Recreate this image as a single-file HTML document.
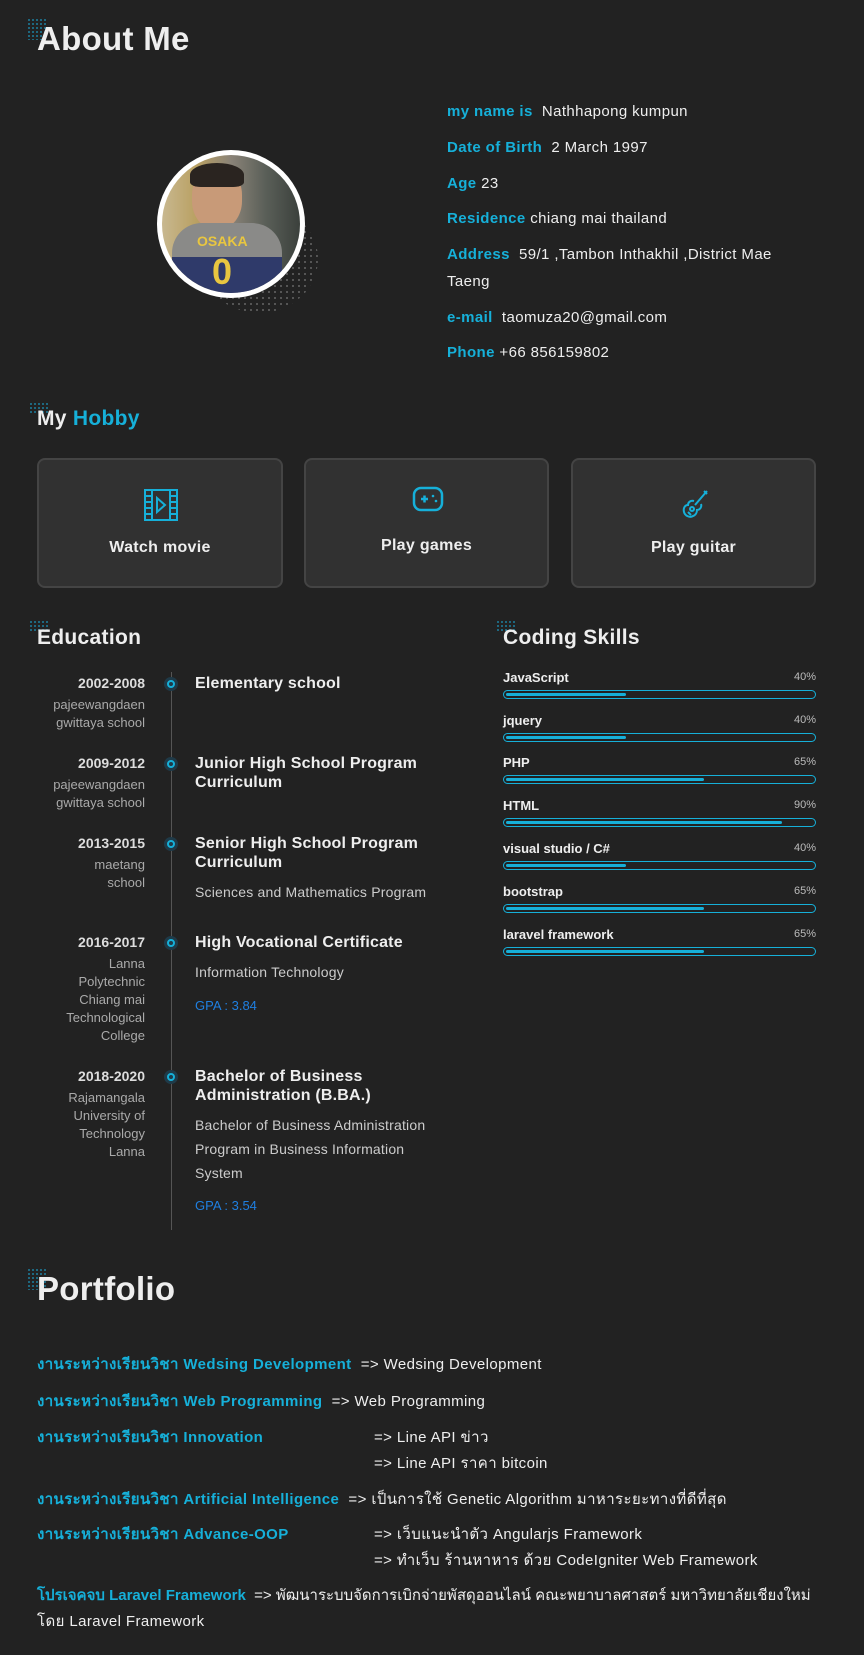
<!DOCTYPE html>
<html><head><meta charset="utf-8"><style>
*{margin:0;padding:0;box-sizing:border-box}
body{width:864px;height:1655px;background:#222222;color:#eee;font-family:"Liberation Sans","Noto Sans CJK SC",sans-serif;position:relative;overflow:hidden}
.a{position:absolute;white-space:nowrap}
.c{color:#16b0d9}
.h1{font-size:33px;font-weight:bold;color:#eee;letter-spacing:0.3px}
.h2{font-size:21px;font-weight:bold;color:#eee;letter-spacing:0.3px}
.dots{position:absolute;width:20px;height:18px;background-image:radial-gradient(#1d7fa0 0.8px,transparent 1px);background-size:4px 4px}
.info{font-size:15px;color:#eee;letter-spacing:0.4px}
.info b{color:#16b0d9;font-weight:bold}
.card{position:absolute;top:458px;height:130px;background:#313131;border:2px solid #444;border-radius:8px}
.card span{position:absolute;left:0;right:0;text-align:center;font-size:16px;font-weight:bold;color:#eee;letter-spacing:0.3px}
.yr{position:absolute;right:719px;font-size:14px;font-weight:bold;color:#ddd;text-align:right}
.sch{position:absolute;right:719px;font-size:13px;color:#aaa;text-align:right;line-height:18px;white-space:normal;width:120px}
.dot{position:absolute;left:164px;width:14px;height:14px;border-radius:50%;background:#1f3a48}
.dot:after{content:"";position:absolute;left:3px;top:3px;width:8px;height:8px;border-radius:50%;border:2px solid #16b0d9;box-sizing:border-box}
.tt{position:absolute;left:195px;font-size:16px;font-weight:bold;color:#eee;line-height:19px;letter-spacing:0.2px}
.td{position:absolute;left:195px;font-size:14px;color:#ccc;line-height:24px;letter-spacing:0.2px}
.gpa{position:absolute;left:195px;font-size:13px;color:#1f7fe0}
.sk{position:absolute;left:503px;width:313px;font-size:13px;font-weight:bold;color:#eee}
.sk i{position:absolute;right:0;top:1px;font-style:normal;font-weight:normal;font-size:11px;color:#bbb}
.bar{position:absolute;left:503px;width:313px;height:9px;border:1.5px solid #16b0d9;border-radius:5px}
.bar div{position:absolute;left:2px;top:1.5px;height:3.5px;background:#16b0d9;border-radius:2px}
.pf{position:absolute;font-size:15px;color:#eee;white-space:nowrap;letter-spacing:0.4px}
.pf b{color:#16b0d9}
</style></head><body>

<div class="dots" style="left:27px;top:18px;height:22px"></div>
<div class="a h1" style="left:37px;top:20px">About Me</div>

<div class="a" style="left:200px;top:205px;width:118px;height:108px;background-image:radial-gradient(#777 0.7px,transparent 1px);background-size:6px 6px;border-radius:50%"></div>
<div class="a" style="left:157px;top:150px;width:148px;height:148px;border-radius:50%;background:#fff"></div>
<div class="a" style="left:162px;top:155px;width:138px;height:138px;border-radius:50%;overflow:hidden;background:linear-gradient(90deg,#c8b890 0%,#b9a062 25%,#8a8378 50%,#5a5f58 75%,#3b403c 100%)">
 <div class="a" style="left:30px;top:12px;width:50px;height:62px;border-radius:45%;background:#c89a78"></div>
 <div class="a" style="left:28px;top:8px;width:54px;height:24px;border-radius:50% 50% 20% 20%;background:#2a2420"></div>
 <div class="a" style="left:10px;top:68px;width:110px;height:40px;border-radius:30px 30px 0 0;background:#8a8a88"></div>
 <div class="a" style="left:10px;top:102px;width:110px;height:40px;background:#2f3a6a"></div>
 <div class="a" style="left:35px;top:78px;font-size:14px;font-weight:bold;color:#e8c640">OSAKA</div>
 <div class="a" style="left:50px;top:96px;font-size:36px;font-weight:bold;color:#e8c640">0</div>
</div>

<div class="a info" style="left:447px;top:103px"><b>my name is</b>&nbsp; Nathhapong kumpun</div>
<div class="a info" style="left:447px;top:139px"><b>Date of Birth</b>&nbsp; 2 March 1997</div>
<div class="a info" style="left:447px;top:175px"><b>Age</b> 23</div>
<div class="a info" style="left:447px;top:210px"><b>Residence</b> chiang mai thailand</div>
<div class="a info" style="left:447px;top:246px"><b>Address</b>&nbsp; 59/1 ,Tambon Inthakhil ,District Mae</div>
<div class="a info" style="left:447px;top:273px">Taeng</div>
<div class="a info" style="left:447px;top:309px"><b>e-mail</b>&nbsp; taomuza20@gmail.com</div>
<div class="a info" style="left:447px;top:344px"><b>Phone</b> +66 856159802</div>

<div class="dots" style="left:29px;top:402px;height:12px"></div>
<div class="a h2" style="left:37px;top:407px">My <span class="c">Hobby</span></div>

<div class="card" style="left:37px;width:246px">
 <svg class="a" style="left:105px;top:29px" width="34" height="32" viewBox="0 0 34 32" fill="none" stroke="#16b0d9" stroke-width="2"><rect x="1" y="1" width="32" height="30"/><line x1="8" y1="1" x2="8" y2="31"/><line x1="26" y1="1" x2="26" y2="31"/><path d="M1 7h7M1 13h7M1 19h7M1 25h7M26 7h7M26 13h7M26 19h7M26 25h7"/><path d="M13 9l8 7-8 7z"/></svg>
 <span style="top:79px">Watch movie</span></div>
<div class="card" style="left:304px;width:245px">
 <svg class="a" style="left:106px;top:26px" width="32" height="26" viewBox="0 0 32 26" fill="none" stroke="#16b0d9" stroke-width="2.5"><rect x="2" y="2" width="28" height="22" rx="7"/><path d="M9 13h7M12.5 9.5v7" stroke-width="2.5"/><circle cx="21" cy="10" r="1.3" fill="#16b0d9" stroke="none"/><circle cx="24" cy="15" r="1.3" fill="#16b0d9" stroke="none"/></svg>
 <span style="top:77px">Play games</span></div>
<div class="card" style="left:571px;width:245px">
 <svg class="a" style="left:108px;top:29px" width="28" height="32" viewBox="0 0 28 32" fill="none" stroke="#16b0d9" stroke-width="2"><path d="M26 2l-12 14"/><path d="M23 2l3 3"/><path d="M13 12c-3-1-6 1-6 4-3 0-5 3-4 7 1 4 6 6 9 4 3-1 4-4 4-6 3 0 5-3 4-6"/><circle cx="11" cy="20" r="2"/><path d="M7 23l3 3"/></svg>
 <span style="top:79px">Play guitar</span></div>

<div class="dots" style="left:29px;top:620px;height:12px"></div>
<div class="a h2" style="left:37px;top:626px">Education</div>
<div class="dots" style="left:496px;top:620px;height:12px"></div>
<div class="a h2" style="left:503px;top:626px">Coding Skills</div>

<div class="a" style="left:171px;top:672px;width:1px;height:558px;background:#555"></div>

<div class="yr" style="top:675px">2002-2008</div>
<div class="sch" style="top:696px">pajeewangdaen gwittaya school</div>
<div class="dot" style="top:677px"></div>
<div class="tt" style="top:674px">Elementary school</div>

<div class="yr" style="top:755px">2009-2012</div>
<div class="sch" style="top:776px">pajeewangdaen gwittaya school</div>
<div class="dot" style="top:757px"></div>
<div class="tt" style="top:754px">Junior High School Program<br>Curriculum</div>

<div class="yr" style="top:835px">2013-2015</div>
<div class="sch" style="top:856px">maetang<br>school</div>
<div class="dot" style="top:837px"></div>
<div class="tt" style="top:834px">Senior High School Program<br>Curriculum</div>
<div class="td" style="top:880px">Sciences and Mathematics Program</div>

<div class="yr" style="top:934px">2016-2017</div>
<div class="sch" style="top:955px">Lanna<br>Polytechnic<br>Chiang mai<br>Technological<br>College</div>
<div class="dot" style="top:936px"></div>
<div class="tt" style="top:933px">High Vocational Certificate</div>
<div class="td" style="top:960px">Information Technology</div>
<div class="gpa" style="top:998px">GPA : 3.84</div>

<div class="yr" style="top:1068px">2018-2020</div>
<div class="sch" style="top:1089px">Rajamangala<br>University of<br>Technology<br>Lanna</div>
<div class="dot" style="top:1070px"></div>
<div class="tt" style="top:1067px">Bachelor of Business<br>Administration (B.BA.)</div>
<div class="td" style="top:1113px">Bachelor of Business Administration<br>Program in Business Information<br>System</div>
<div class="gpa" style="top:1198px">GPA : 3.54</div>

<div class="sk" style="top:670px">JavaScript<i>40%</i></div><div class="bar" style="top:690px"><div style="width:120px"></div></div>
<div class="sk" style="top:713px">jquery<i>40%</i></div><div class="bar" style="top:733px"><div style="width:120px"></div></div>
<div class="sk" style="top:755px">PHP<i>65%</i></div><div class="bar" style="top:775px"><div style="width:198px"></div></div>
<div class="sk" style="top:798px">HTML<i>90%</i></div><div class="bar" style="top:818px"><div style="width:276px"></div></div>
<div class="sk" style="top:841px">visual studio / C#<i>40%</i></div><div class="bar" style="top:861px"><div style="width:120px"></div></div>
<div class="sk" style="top:884px">bootstrap<i>65%</i></div><div class="bar" style="top:904px"><div style="width:198px"></div></div>
<div class="sk" style="top:927px">laravel framework<i>65%</i></div><div class="bar" style="top:947px"><div style="width:198px"></div></div>

<div class="dots" style="left:27px;top:1268px;height:22px"></div>
<div class="a h1" style="left:37px;top:1270px">Portfolio</div>

<div class="pf" style="left:37px;top:1352px"><b>งานระหว่างเรียนวิชา Wedsing Development</b>&nbsp; =&gt; Wedsing Development</div>
<div class="pf" style="left:37px;top:1389px"><b>งานระหว่างเรียนวิชา Web Programming</b>&nbsp; =&gt; Web Programming</div>
<div class="pf" style="left:37px;top:1425px"><b>งานระหว่างเรียนวิชา Innovation</b></div>
<div class="pf" style="left:374px;top:1425px">=&gt; Line API ข่าว</div>
<div class="pf" style="left:374px;top:1451px">=&gt; Line API ราคา bitcoin</div>
<div class="pf" style="left:37px;top:1487px"><b>งานระหว่างเรียนวิชา Artificial Intelligence</b>&nbsp; =&gt; เป็นการใช้ Genetic Algorithm มาหาระยะทางที่ดีที่สุด</div>
<div class="pf" style="left:37px;top:1522px"><b>งานระหว่างเรียนวิชา Advance-OOP</b></div>
<div class="pf" style="left:374px;top:1522px">=&gt; เว็บแนะนำตัว Angularjs Framework</div>
<div class="pf" style="left:374px;top:1548px">=&gt; ทำเว็บ ร้านหาหาร ด้วย CodeIgniter Web Framework</div>
<div class="pf" style="left:37px;top:1583px;letter-spacing:0"><b>โปรเจคจบ Laravel Framework</b>&nbsp; =&gt; พัฒนาระบบจัดการเบิกจ่ายพัสดุออนไลน์ คณะพยาบาลศาสตร์ มหาวิทยาลัยเชียงใหม่</div>
<div class="pf" style="left:37px;top:1609px">โดย Laravel Framework</div>
</body></html>
